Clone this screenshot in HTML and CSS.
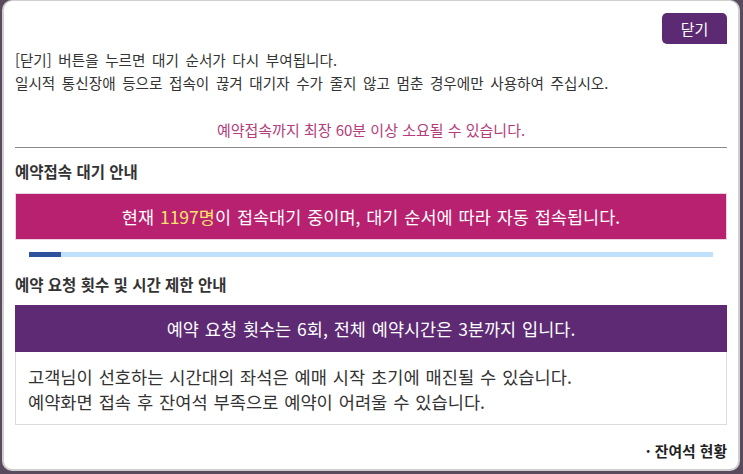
FILE: index.html
```html
<!DOCTYPE html>
<html lang="ko">
<head>
    <meta charset="UTF-8">
    <meta name="viewport" content="width=device-width, initial-scale=1.0">
    <title>예약접속 대기</title>
    <link rel="stylesheet" href="styles.css">
</head>
<body>
    <div class="modal">
        <div class="top-bar">
            <button class="close-btn">닫기</button>
        </div>
        <div class="notice">
            <p>[닫기] 버튼을 누르면 대기 순서가 다시 부여됩니다.</p>
            <p>일시적 통신장애 등으로 접속이 끊겨 대기자 수가 줄지 않고 멈춘 경우에만 사용하여 주십시오.</p>
        </div>
        <p class="warn">예약접속까지 최장 60분 이상 소요될 수 있습니다.</p>
        <div class="divider"></div>

        <h2 class="section-title">예약접속 대기 안내</h2>
        <div class="banner banner-wait">
            <span>현재 <span class="count">1197명</span>이 접속대기 중이며, 대기 순서에 따라 자동 접속됩니다.</span>
        </div>
        <div class="progress">
            <div class="progress-fill" style="width: 4.7%"></div>
        </div>

        <h2 class="section-title second">예약 요청 횟수 및 시간 제한 안내</h2>
        <div class="banner banner-limit">
            <span>예약 요청 횟수는 6회, 전체 예약시간은 3분까지 입니다.</span>
        </div>
        <div class="info-box">
            <p>고객님이 선호하는 시간대의 좌석은 예매 시작 초기에 매진될 수 있습니다.</p>
            <p>예약화면 접속 후 잔여석 부족으로 예약이 어려울 수 있습니다.</p>
        </div>

        <div class="footer-link">· 잔여석 현황</div>
    </div>
</body>
</html>
```

FILE: styles.css
```css
body {
    margin: 0;
    background-color: #5a4a5e;
    font-family: "Noto Sans CJK KR", "Noto Sans", sans-serif;
    color: #333;
}
p {
    margin: 0;
}
.modal {
    box-sizing: border-box;
    height: 471px;
    margin: 0 3px 0 2px;
    padding: 11px 11px 0 11px;
    background-color: #fff;
    border: 2px solid #cfcfcf;
    border-top-width: 1px;
    border-radius: 10px;
}
.top-bar {
    display: flex;
    justify-content: flex-end;
    padding-top: 1px;
}
.close-btn {
    width: 65px;
    height: 31px;
    border: none;
    border-radius: 5px 5px 0 5px;
    background-color: #5c2a72;
    color: #fff;
    font-family: inherit;
    font-size: 15px;
    padding: 0;
}
.notice {
    margin-top: 4px;
    font-size: 14.6px;
    word-spacing: 2.5px;
    line-height: 23px;
}
.warn {
    margin-top: 24px;
    text-align: center;
    color: #b33d7b;
    font-size: 15px;
    line-height: 23px;
}
.divider {
    margin-top: 6px;
    border-top: 1px solid #8a8a8a;
}
.section-title {
    margin: 13px 0 0;
    font-size: 15.5px;
    font-weight: bold;
    line-height: 20px;
    color: #333;
}
.section-title.second {
    margin-top: 17px;
}
.banner {
    box-sizing: border-box;
    height: 47px;
    margin-top: 12px;
    display: flex;
    align-items: center;
    justify-content: center;
    color: #fff;
    font-size: 17.5px;
    word-spacing: 1px;
}
.banner-wait {
    background-color: #b72170;
    border: 1px solid #ecd3e4;
}
.banner-wait .count {
    color: #f6e46c;
}
.progress {
    height: 5px;
    margin: 12px 14px 0;
    background-color: #bfe1fb;
}
.progress-fill {
    height: 100%;
    background-color: #2e519b;
}
.banner-limit {
    margin-top: 11px;
    background-color: #5d2a73;
}
.info-box {
    box-sizing: border-box;
    height: 73px;
    padding: 12px 12px 0;
    border: 1px solid #dcdcdc;
    border-top: none;
    font-size: 17.6px;
    word-spacing: 1px;
    line-height: 25px;
    color: #333;
}
.footer-link {
    margin-top: 16px;
    text-align: right;
    font-size: 14.8px;
    font-weight: bold;
    line-height: 20px;
    color: #222;
}
```
